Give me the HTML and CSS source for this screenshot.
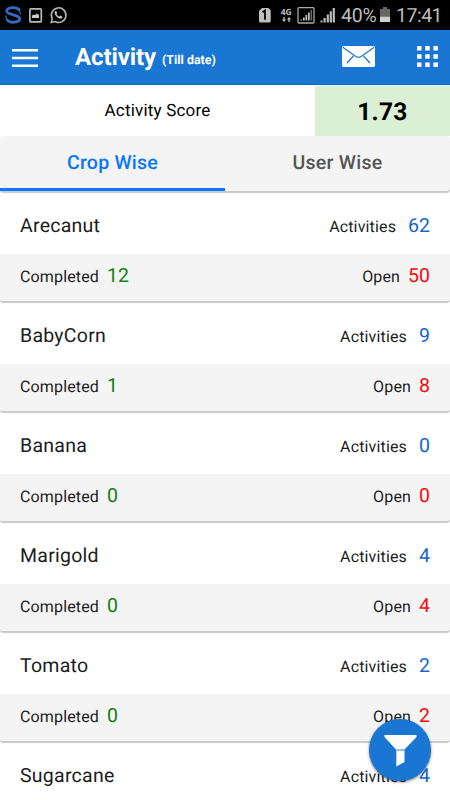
FILE: index.html
```html
<!DOCTYPE html>
<html lang="en">
<head>
<meta charset="utf-8">
<title>Activity</title>
<link rel="stylesheet" href="styles.css">
</head>
<body>
<div class="screen">
  <div class="status">
    <svg class="status-left" width="70" height="30" viewBox="0 0 70 30" fill="none">
      <path d="M19.800 10.500C17 6.500 6.800 6.800 6.800 11.300C6.800 15 19.800 14.700 19.800 18.700C19.500 23.300 9 23.300 6.800 19.300" stroke="#356ac0" stroke-width="2.800"/>
      <path d="M5.800 15.500C6 19 8 22 13 22.300M20.500 14.500C20 10 18 7.500 13 7.300" stroke="#356ac0" stroke-width="1.300"/>
      <rect x="29.900" y="8.900" width="11.400" height="13" rx="1" stroke="#b9b9b9" stroke-width="1.700"/>
      <path d="M32 18v-2.500l2-1 1 .8 1.700-2 1.300 1.500 1-.5V18z" fill="#c9c9c9"/>
      <path d="M51.200 22.500l1-3.900A7.300 7.300 0 1 1 55 21.500z" stroke="#b9b9b9" stroke-width="1.500"/>
      <path d="M54.700 11.700c.8-1.300 1.700-.9 2.100.2l.5 1.100-.8 1c.7 1.300 1.600 2.100 2.900 2.600l1-1 1.700.8c.8.500.2 1.700-.8 2.100-2.900.8-7.300-3.600-6.600-6.800z" fill="#c0c0c0"/>
    </svg>
    <div class="status-right">
      <svg width="80" height="30" viewBox="257 0 80 30">
        <path d="M262 8h6.300l2.400 2.500V21q0 1.500-1.500 1.500H260.500Q259 22.500 259 21V11z" fill="#c0c0c0"/>
        <path d="M262.500 12.200l2.500-1.700v9.300" fill="none" stroke="#000" stroke-width="1.800"/>
        <text x="280.700" y="15.300" class="net">4G</text>
        <path d="M284 17v3.500M289 22v-3.500" stroke="#bbb" stroke-width="1.400"/>
        <path d="M281.900 19.500h4.200L284 22zM286.900 19.500h4.200L289 17z" fill="#bbb"/>
        <rect x="298" y="7.700" width="16" height="15.300" rx="1" fill="none" stroke="#aaa" stroke-width="1.300"/>
        <path d="M300.300 20.500v-1h1.700v1zM303 20.500v-3h1.700v3zM305.500 20.500v-5.500h1.700v5.500zM308 20.500v-8h1.700v8z" fill="#c0c0c0"/>
        <path d="M310.500 20.500v-10.500h1.500v10.500z" fill="#666"/>
        <path d="M320.500 22.500v-2h2v2zM323.500 22.500v-4.500h2.200v4.500zM326.700 22.500v-8h2.200v8zM329.700 22.500v-11.200h2.200v11.200zM332.700 22.500V8h2.200v14.500z" fill="#bcbcbc"/>
      </svg>
      <span class="battery-text">40%</span>
      <svg class="battery" width="10" height="16" viewBox="0 0 10 16"><path d="M3 0h4v2h3v7.500H0V2h3z" fill="#666"/><path d="M0 9.500h10V15H0z" fill="#d0d0d0"/></svg>
      <span class="clock">17:41</span>
    </div>
  </div>

  <header class="bar">
    <svg class="menu" width="26" height="20" viewBox="0 0 26 20"><path d="M0 2.200h26M0 10h26M0 17.800h26" stroke="#fff" stroke-width="2.400"/></svg>
    <h1 class="title">Activity</h1>
    <span class="subtitle">(Till date)</span>
    <svg class="mail" width="33" height="21" viewBox="0 0 33 21" fill="none"><rect width="33" height="21" rx="1.500" fill="#fff"/><path d="M.8 1.200L13.500 10.300Q16.500 12.300 19.500 10.300L32.200 1.200M5 17l6.500-7M28 17l-6.500-7" stroke="#1976d2" stroke-width="1.200"/></svg>
    <svg class="apps" width="21" height="21" viewBox="0 0 21 21" fill="#fff"><path d="M0 0h4.500v4.500H0zM8.200 0h4.500v4.500H8.200zM16.400 0h4.500v4.500H16.400zM0 8.200h4.500v4.500H0zM8.200 8.200h4.500v4.500H8.200zM16.400 8.200h4.500v4.500H16.400zM0 16.400h4.500v4.500H0zM8.200 16.400h4.500v4.500H8.200zM16.400 16.400h4.500v4.500H16.400z"/></svg>
  </header>

  <div class="score">
    <div class="score-label">Activity Score</div>
    <div class="score-value">1.73</div>
  </div>

  <nav class="tabs">
    <div class="tab active">Crop Wise</div>
    <div class="tab">User Wise</div>
  </nav>

  <main class="list">
    <section class="card">
      <div class="row top"><span class="name">Arecanut</span><span class="label">Activities</span><span class="num blue">62</span></div>
      <div class="row bottom"><span class="label">Completed</span><span class="num green">12</span><span class="label open">Open</span><span class="num red">50</span></div>
    </section>
    <section class="card">
      <div class="row top"><span class="name">BabyCorn</span><span class="label">Activities</span><span class="num blue">9</span></div>
      <div class="row bottom"><span class="label">Completed</span><span class="num green">1</span><span class="label open">Open</span><span class="num red">8</span></div>
    </section>
    <section class="card">
      <div class="row top"><span class="name">Banana</span><span class="label">Activities</span><span class="num blue">0</span></div>
      <div class="row bottom"><span class="label">Completed</span><span class="num green">0</span><span class="label open">Open</span><span class="num red">0</span></div>
    </section>
    <section class="card">
      <div class="row top"><span class="name">Marigold</span><span class="label">Activities</span><span class="num blue">4</span></div>
      <div class="row bottom"><span class="label">Completed</span><span class="num green">0</span><span class="label open">Open</span><span class="num red">4</span></div>
    </section>
    <section class="card">
      <div class="row top"><span class="name">Tomato</span><span class="label">Activities</span><span class="num blue">2</span></div>
      <div class="row bottom"><span class="label">Completed</span><span class="num green">0</span><span class="label open">Open</span><span class="num red">2</span></div>
    </section>
    <section class="card">
      <div class="row top"><span class="name">Sugarcane</span><span class="label">Activities</span><span class="num blue">4</span></div>
    </section>
  </main>

  <div class="fab">
    <svg width="33" height="32" viewBox="0 0 33 32"><path d="M.5 0h32v2L20.500 14.500h-8.500L.5 2z" fill="#fff"/><path d="M12.300 15.500h8.200V27l-8.200 4.500z" fill="#fff"/><path d="M12 15h8.500" stroke="#a8c8ec"/></svg>
  </div>
</div>
</body>
</html>
```

FILE: styles.css
```css
* { box-sizing: border-box; }
body { margin: 0; font-family: Roboto, sans-serif; color: #1c1c1c; background: #fff; text-rendering: geometricPrecision; }
.screen { position: relative; width: 450px; height: 800px; overflow: hidden; background: #fff; }

.status { display: flex; justify-content: space-between; height: 30px; background: #000; color: #bdbdbd; }
.status svg { display: block; flex: none; }
.status-right { display: flex; align-items: center; padding-right: 7px; }
.net { font: bold 8.500px "Noto Sans", sans-serif; fill: #bbb; }
.battery-text { margin-left: 4px; padding-top: 2px; font-size: 19.500px; line-height: 30px; width: 35px; letter-spacing: -.2px; }
.battery { margin-left: 4px; }
.clock { margin-left: 6px; padding-top: 2px; font-size: 19.500px; line-height: 30px; width: 47px; letter-spacing: -.5px; }

.bar { display: flex; height: 55px; background: #1976d2; border-bottom: 1px solid #0c66c6; color: #fff; }
.bar svg { flex: none; display: block; }
.menu { margin: 18px 0 0 12px; }
.title { margin: 0 0 0 37px; font-size: 24px; font-weight: 700; line-height: 54px; width: 81px; white-space: nowrap; letter-spacing: -.1px; }
.subtitle { margin-left: 6px; font-size: 12.400px; font-weight: 700; line-height: 62px; white-space: nowrap; }
.mail { margin: 16px 0 0 auto; }
.apps { margin: 16px 12px 0 42px; }

.score { display: flex; height: 51px; }
.score-label { width: 315px; text-align: center; font-size: 17px; letter-spacing: .2px; line-height: 52px; color: #000; }
.score-value { flex: 1; margin-top: 1px; background: #daefd3; text-align: center; font-size: 24.500px; font-weight: 700; letter-spacing: .3px; line-height: 52px; height: 50px; color: #000; }

.tabs { display: flex; height: 55px; background: #f4f4f4; border-radius: 3px; box-shadow: 0 2px 1px #c8c8c8; }
.tab { flex: 1; text-align: center; font-size: 19.500px; font-weight: 500; letter-spacing: .25px; line-height: 53px; height: 55px; color: #555; }
.active { color: #0a76fb; border-bottom: 3px solid #0a76fb; }

.list { padding-top: 3px; }
.card { height: 107px; margin-bottom: 3px; border-radius: 3px; background: #fff; box-shadow: 0 2px 1px #c8c8c8; }
.row { display: flex; align-items: baseline; padding: 0 20px; }
.top { height: 60px; line-height: 64px; }
.bottom { height: 47px; line-height: 44px; background: #f4f4f4; border-radius: 0 0 3px 3px; }
.name { flex: 1; font-size: 19.500px; letter-spacing: .25px; }
.label { font-size: 16px; letter-spacing: .15px; }
.open { margin-left: auto; }
.num { font-size: 19.500px; letter-spacing: 0; }
.blue { color: #1566ce; margin-left: 12px; }
.green { color: #108010; margin-left: 8px; }
.red { color: #f40a0a; margin-left: 8px; }

.fab { position: absolute; left: 369px; top: 719px; width: 62px; height: 62px; border-radius: 50%; background: #1976d2; box-shadow: 0 1px 3px rgba(0, 0, 0, .5); display: flex; justify-content: center; padding-top: 16px; }
```
